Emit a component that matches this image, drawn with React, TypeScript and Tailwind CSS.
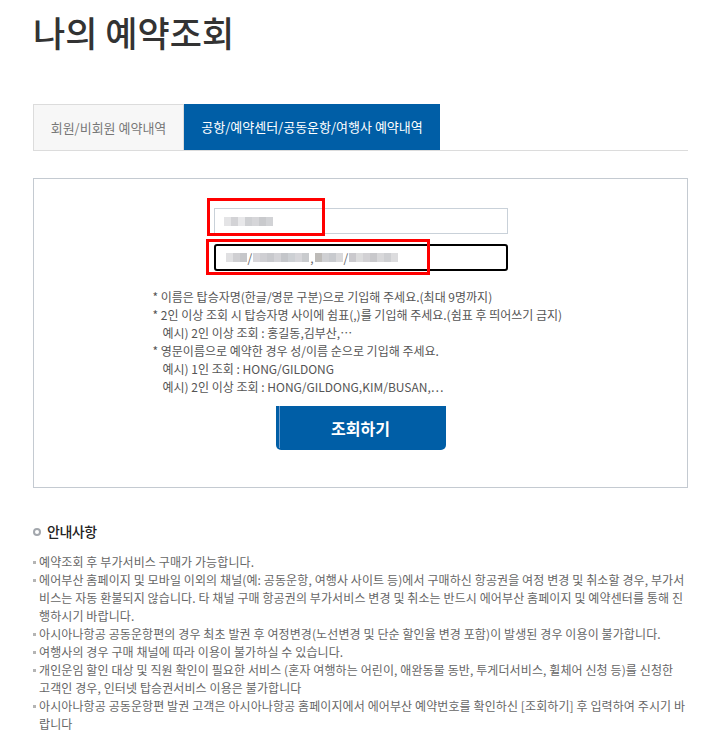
import React from "react";

const FONT = "font-['Noto_Sans_CJK_KR','Noto_Sans',sans-serif]";

type GuideItem = {
  readonly text: string;
  readonly keepWords?: boolean;
};

const GUIDE_ITEMS: readonly GuideItem[] = [
  { text: "예약조회 후 부가서비스 구매가 가능합니다." },
  {
    text: "에어부산 홈페이지 및 모바일 이외의 채널(예: 공동운항, 여행사 사이트 등)에서 구매하신 항공권을 여정 변경 및 취소할 경우, 부가서비스는 자동 환불되지 않습니다. 타 채널 구매 항공권의 부가서비스 변경 및 취소는 반드시 에어부산 홈페이지 및 예약센터를 통해 진행하시기 바랍니다.",
  },
  {
    text: "아시아나항공 공동운항편의 경우 최초 발권 후 여정변경(노선변경 및 단순 할인율 변경 포함)이 발생된 경우 이용이 불가합니다.",
  },
  { text: "여행사의 경우 구매 채널에 따라 이용이 불가하실 수 있습니다." },
  {
    text: "개인운임 할인 대상 및 직원 확인이 필요한 서비스 (혼자 여행하는 어린이, 애완동물 동반, 투게더서비스, 휠체어 신청 등)를 신청한 고객인 경우, 인터넷 탑승권서비스 이용은 불가합니다",
    keepWords: true,
  },
  {
    text: "아시아나항공 공동운항편 발권 고객은 아시아나항공 홈페이지에서 에어부산 예약번호를 확인하신 [조회하기] 후 입력하여 주시기 바랍니다",
  },
];

// mosaic blocks standing in for the blurred personal data
const MOSAIC_1 = ["#e4e4e6", "#d3d3d6", "#e8e8ea", "#cfd0d3", "#d6d6d9", "#c9cacd", "#d2d3d6"];
const MOSAIC_2A = ["#e0e0e2", "#cfcfd2", "#c6c7ca"];
const MOSAIC_2B = ["#d8d6da", "#cfcfd3", "#c8c9cd", "#d3d3d7", "#c4c6ca", "#cdd0d4", "#d6d6da", "#c9cbce"];
const MOSAIC_2C = ["#bdbbb8", "#cfd0d3", "#c8cace", "#d9d9db"];
const MOSAIC_2D = ["#cac9cd", "#dcdcdd", "#d2d1d4", "#c8c8cb", "#d8d8da", "#cecfd2", "#dcdcde"];

function Mosaic({ colors }: { colors: readonly string[] }) {
  return (
    <span className="flex h-[9px] blur-[0.6px]">
      {colors.map((c, i) => (
        <span key={i} className="w-[7px] h-full" style={{ backgroundColor: c }} />
      ))}
    </span>
  );
}

export default function App() {
  return (
    <div className={`${FONT} bg-white w-[710px] h-[747px] overflow-hidden relative`}>
      <div className="pl-[33px] pr-[22px]">
        {/* Title */}
        <h1 className="pt-[8px] text-[35px] leading-[48px] font-medium text-[#333]">
          나의 예약조회
        </h1>

        {/* Tabs */}
        <div className="mt-[48px] flex border-b border-[#dcdcdc]">
          <div className="w-[151px] h-[46px] flex items-center justify-center bg-[#f7f7f7] border border-b-0 border-[#dcdcdc] text-[13px] text-[#777]">
            회원/비회원 예약내역
          </div>
          <div className="w-[256px] h-[46px] flex items-center justify-center bg-[#005ea6] text-[13px] text-white">
            공항/예약센터/공동운항/여행사 예약내역
          </div>
        </div>

        {/* Search box */}
        <div className="mt-[27px] h-[310px] border border-[#c4cad1] flex flex-col items-center pt-[29px]">
          <div className="w-[294px] h-[26px] border border-[#c9d1d9] flex items-center pl-[9px]">
            <Mosaic colors={MOSAIC_1} />
          </div>
          <div className="mt-[10px] w-[294px] h-[27px] border-2 border-black rounded-[3px] flex items-center pl-[10px] text-[12px] text-[#666]">
            <Mosaic colors={MOSAIC_2A} />
            <span className="mx-[1px] leading-none">/</span>
            <Mosaic colors={MOSAIC_2B} />
            <span className="mx-[1px] leading-none">,</span>
            <Mosaic colors={MOSAIC_2C} />
            <span className="mx-[1px] leading-none">/</span>
            <Mosaic colors={MOSAIC_2D} />
          </div>

          <div className="mt-[17px] w-[420px] pl-[2px] text-[12px] leading-[18px] text-[#555]">
            <p>* 이름은 탑승자명(한글/영문 구분)으로 기입해 주세요.(최대 9명까지)</p>
            <p>* 2인 이상 조회 시 탑승자명 사이에 쉼표(,)를 기입해 주세요.(쉼표 후 띄어쓰기 금지)</p>
            <p className="pl-[10px]">예시) 2인 이상 조회 : 홍길동,김부산,⋯</p>
            <p>* 영문이름으로 예약한 경우 성/이름 순으로 기입해 주세요.</p>
            <p className="pl-[10px]">예시) 1인 조회 : HONG/GILDONG</p>
            <p className="pl-[10px]">예시) 2인 이상 조회 : HONG/GILDONG,KIM/BUSAN,⋯</p>
          </div>

          <button className="mt-[10px] w-[170px] h-[44px] bg-[#005ea6] rounded-b-[5px] flex items-center justify-center text-white text-[16px] font-bold relative">
            <span className="absolute left-[3px] top-0 bottom-[2px] w-[1px] bg-[#6f9ccc]" />
            조회하기
          </button>
        </div>

        {/* Guide */}
        <div className="mt-[33px] flex items-center gap-[6px]">
          <span className="w-[8px] h-[8px] rounded-full border-[2.5px] border-[#a3a7ad]" />
          <h2 className="text-[14px] font-medium tracking-[-0.5px] text-[#222]">안내사항</h2>
        </div>
        <ul className="mt-[11px] -mr-[3px] text-[12px] leading-[18px] tracking-[0.1px] text-[#666]">
          {GUIDE_ITEMS.map((item) => (
            <li key={item.text} className={`relative pl-[6px] ${item.keepWords ? "break-keep" : ""}`}>
              <span className="absolute left-0 top-[8px] w-[3px] h-[3px] bg-[#b4b4b4]" />
              {item.text}
            </li>
          ))}
        </ul>
      </div>

      {/* red annotation boxes */}
      <div className="absolute left-[207px] top-[198px] w-[118px] h-[38px] border-[3px] border-[#ff0000]" />
      <div className="absolute left-[206px] top-[239px] w-[224px] h-[36px] border-[3px] border-[#ff0000]" />
    </div>
  );
}
